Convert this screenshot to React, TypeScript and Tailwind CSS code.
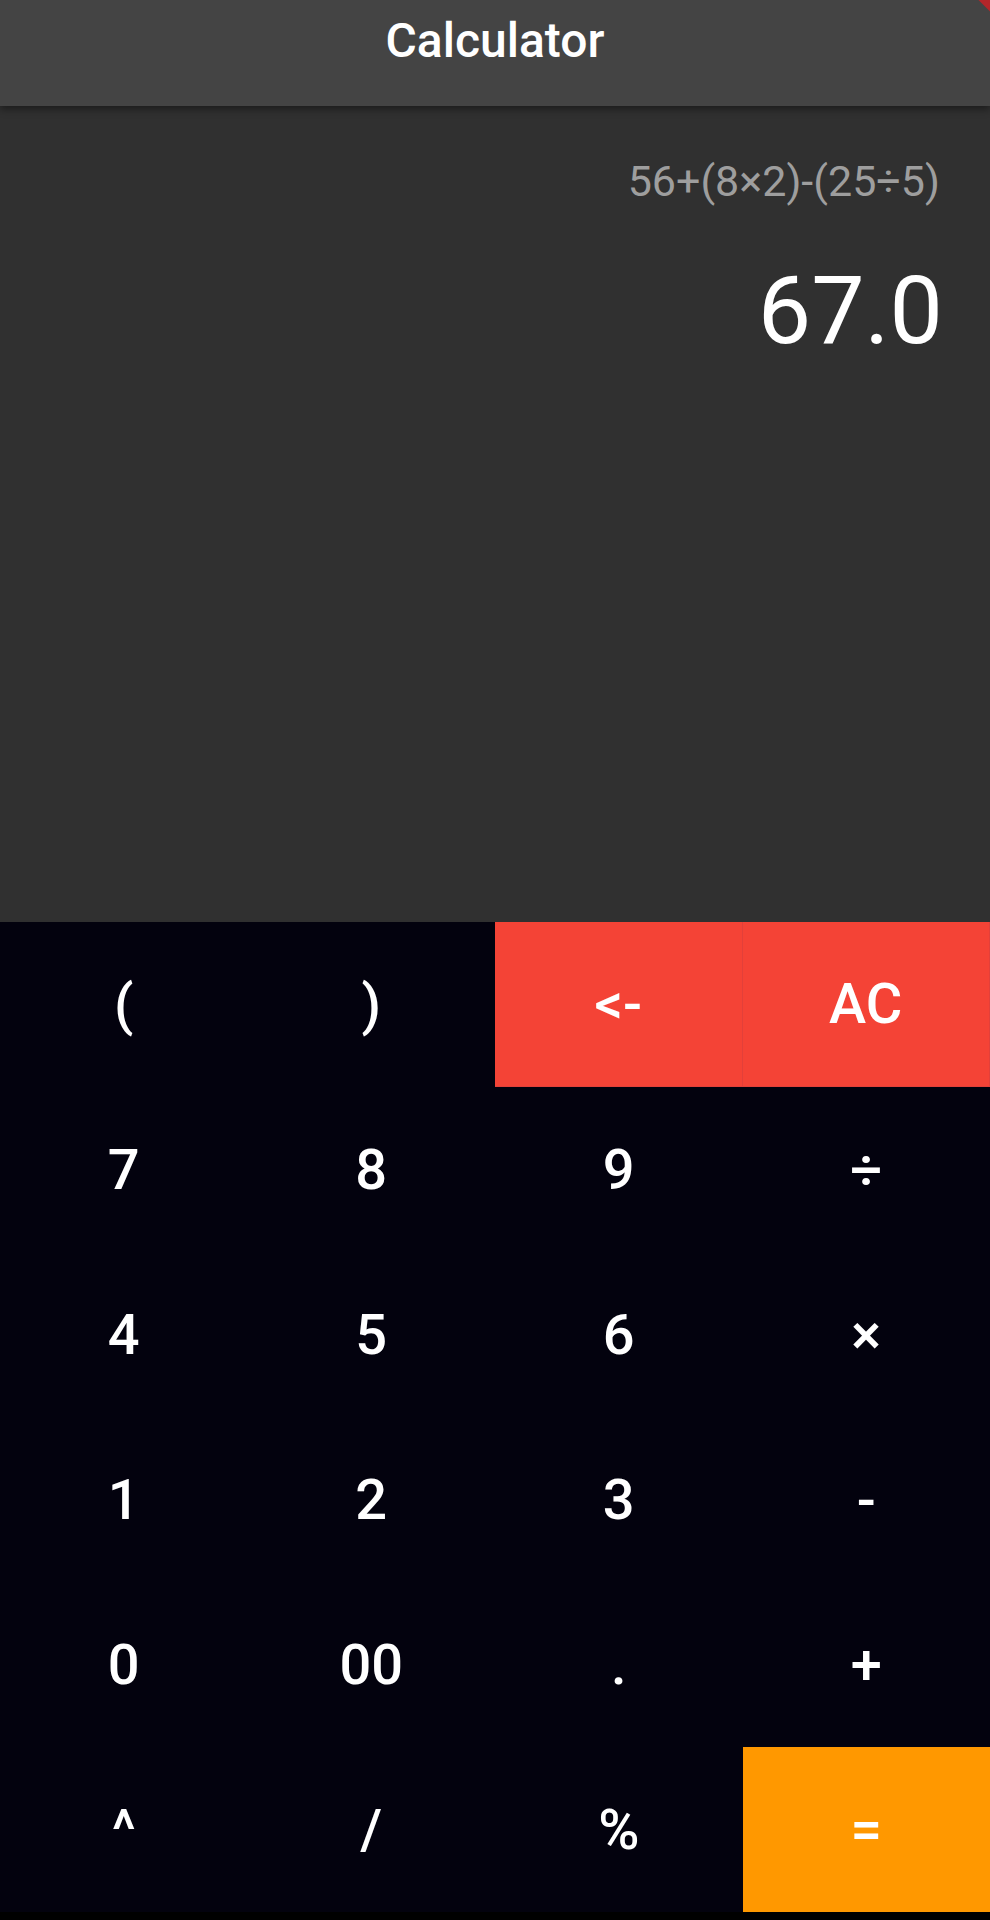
export default function App() {
  const rows: { label: string; tone?: "red" | "orange" }[][] = [
    [{ label: "(" }, { label: ")" }, { label: "<-", tone: "red" }, { label: "AC", tone: "red" }],
    [{ label: "7" }, { label: "8" }, { label: "9" }, { label: "÷" }],
    [{ label: "4" }, { label: "5" }, { label: "6" }, { label: "×" }],
    [{ label: "1" }, { label: "2" }, { label: "3" }, { label: "-" }],
    [{ label: "0" }, { label: "00" }, { label: "." }, { label: "+" }],
    [{ label: "^" }, { label: "/" }, { label: "%" }, { label: "=", tone: "orange" }],
  ];

  return (
    <div className="relative flex h-[1920px] w-full flex-col overflow-hidden bg-black font-['Roboto',sans-serif]">
      {/* app bar */}
      <header className="relative z-10 flex h-[106px] shrink-0 justify-center bg-[#444444] pt-[17px] shadow-[0_3px_8px_rgba(0,0,0,0.45)]">
        <h1 className="text-[48px] font-medium leading-none text-white">Calculator</h1>
      </header>

      {/* display */}
      <section className="flex flex-1 flex-col items-end bg-[#303030] pr-[50px] pt-[54px]">
        <p className="text-[43px] leading-none text-[#9e9e9e]">56+(8×2)-(25÷5)</p>
        <p className="-mr-[3px] mt-[60px] text-[95px] leading-none text-white">67.0</p>
      </section>

      {/* keypad */}
      <div className="grid h-[990px] shrink-0 grid-cols-4 grid-rows-6 bg-[#03020e]">
        {rows.flat().map((key, i) => (
          <button
            key={i}
            className={
              key.tone === "red"
                ? "flex items-center justify-center border-b border-r border-[#e2403a] bg-[#f44336] text-[56px] font-medium leading-none text-white"
                : key.tone === "orange"
                  ? "flex items-center justify-center bg-[#ff9800] text-[56px] font-medium leading-none text-white"
                  : "flex items-center justify-center text-[56px] font-medium leading-none text-white"
            }
          >
            {key.label}
          </button>
        ))}
      </div>
      <div className="h-[8px] shrink-0 bg-black" />

      {/* debug banner corner */}
      <div className="absolute right-[-34px] top-[-4px] z-20 h-[12px] w-[70px] rotate-45 bg-[#b3262a]" />
    </div>
  );
}
